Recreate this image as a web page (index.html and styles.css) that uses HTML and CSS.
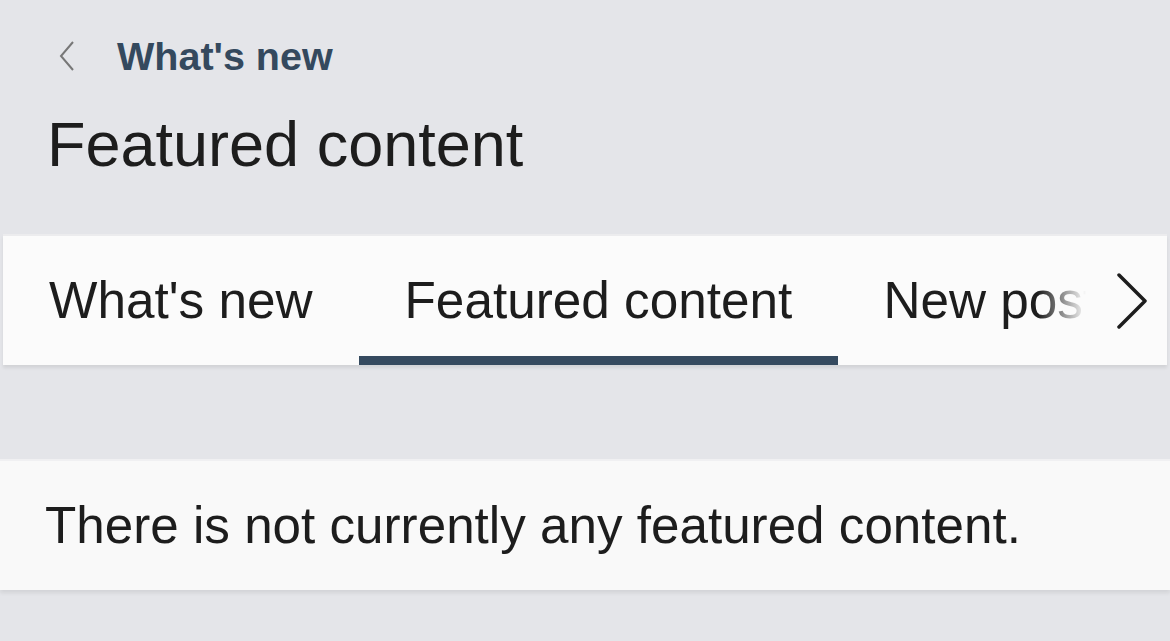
FILE: index.html
```html
<!DOCTYPE html>
<html>
<head>
<meta charset="utf-8">
<link rel="stylesheet" href="styles.css">
</head>
<body>
<div class="page">
  <header class="header">
    <a class="back">
      <svg class="back-icon" width="20" height="32" viewBox="0 0 20 32"><path d="M16 2 L4 16 L16 30" fill="none" stroke="#777" stroke-width="2"/></svg>
      <span class="back-label">What's new</span>
    </a>
    <h1 class="title">Featured content</h1>
  </header>
  <nav class="tabs">
    <div class="tab-list">
      <div class="tab">What's new</div>
      <div class="tab active">Featured content</div>
      <div class="tab fade">New posts</div>
    </div>
    <div class="tab-next">
      <svg width="34" height="56" viewBox="0 0 34 56"><path d="M4 2 L30 28 L4 54" fill="none" stroke="#1d1d1d" stroke-width="3.5" stroke-linecap="round" stroke-linejoin="round"/></svg>
    </div>
  </nav>
  <section class="card">
    <p class="empty">There is not currently any featured content.</p>
  </section>
</div>
</body>
</html>
```
FILE: styles.css
```css
html, body {
  margin: 0;
  padding: 0;
  background: #e4e5e9;
  font-family: "Liberation Sans", Arial, sans-serif;
  color: #1d1d1d;
  height: 100%;
  overflow: hidden;
}
.page {
  padding-top: 34px;
}
.header {
  padding: 0 47px;
}
.back {
  display: flex;
  align-items: center;
  gap: 40px;
  margin-left: 10px;
  height: 44px;
}
.back-label {
  font-weight: bold;
  font-size: 39.5px;
  color: #34495e;
}
.title {
  margin: 26px 0 0;
  font-weight: normal;
  font-size: 63px;
  line-height: 80px;
}
.tabs {
  margin: 50px 3px 0;
  height: 129px;
  background: #fbfbfb;
  border-top: 2px solid #ececee;
  box-shadow: 0 3px 3px rgba(0,0,0,0.08);
  display: flex;
  align-items: stretch;
}
.tab-list {
  display: flex;
  flex: 1;
  overflow: hidden;
}
.tab {
  font-size: 51.3px;
  white-space: nowrap;
  padding: 0 46px;
  display: flex;
  align-items: center;
  border-bottom: 9px solid transparent;
  padding-top: 9px;
}
.tab.active {
  border-bottom-color: #354a5f;
}
.tab.fade {
  padding-left: 45px;
  -webkit-mask-image: linear-gradient(to right, #000 200px, transparent 248px);
  mask-image: linear-gradient(to right, #000 200px, transparent 248px);
}
.tab-next {
  width: 70px;
  flex: none;
  display: flex;
  align-items: center;
  justify-content: center;
}
.card {
  margin-top: 94px;
  height: 129px;
  background: #f9f9f9;
  border-top: 2px solid #f0f0f2;
  box-shadow: 0 3px 4px rgba(0,0,0,0.08);
  display: flex;
  align-items: center;
  padding: 0 45px;
}
.empty {
  margin: 0;
  font-size: 51.2px;
}
```
